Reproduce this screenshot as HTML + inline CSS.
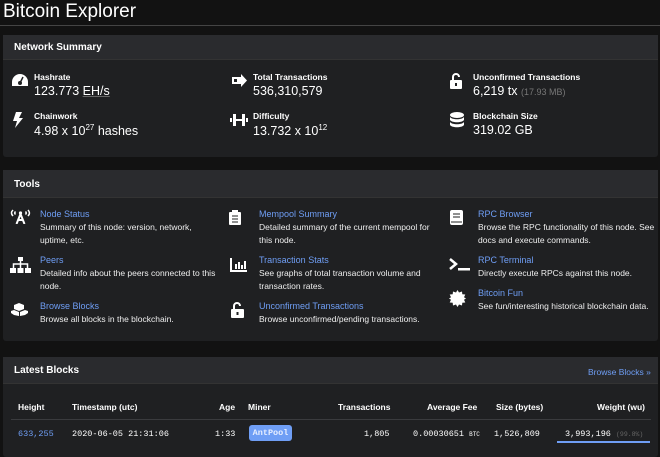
<!DOCTYPE html>
<html><head><meta charset="utf-8"><style>
*{margin:0;padding:0;box-sizing:border-box}
body{width:660px;height:447px;overflow:hidden;background:#121212;color:#fff;font-family:"Liberation Sans",sans-serif;position:relative}
.a{position:absolute;white-space:nowrap}
.card{position:absolute;left:3px;width:655px;background:#1f2022;border-radius:3px}
.hd{position:absolute;left:0;top:0;width:100%;background:#2a2b2e;border-bottom:1px solid #333}
.hd span{position:absolute;left:11px;font-size:10px;font-weight:bold}
.lbl{font-size:8.5px;font-weight:bold}
.val{font-size:12.5px}
.lk{color:#6f9ef5;font-size:9px}
.ds{font-size:8.5px;line-height:13px;color:#eee;white-space:normal}
.th{font-size:8.5px;font-weight:bold;position:absolute;top:402px}
.td{font-size:8.5px;font-family:"Liberation Mono",monospace;position:absolute;top:429px}
</style></head><body>
<div class="a" style="left:3px;top:1px;font-size:19px">Bitcoin Explorer</div>
<div class="a" style="left:0;top:25px;width:660px;height:1px;background:#444"></div>

<div class="card" style="top:35px;height:122px">
<div class="hd" style="height:25px"><span style="top:7px">Network Summary</span></div>
</div>
<svg class="a" style="left:11px;top:73px" width="18" height="14" viewBox="0 0 18 14"><path d="M9 1A8 8 0 0 0 1 9v4h16V9A8 8 0 0 0 9 1z" fill="#fff"/><circle cx="9" cy="10" r="2" fill="#1f2022"/><path d="M9 10l3-6" stroke="#1f2022" stroke-width="1.5"/></svg>
<div class="a lbl" style="left:34px;top:72px">Hashrate</div>
<div class="a val" style="left:34px;top:84px">123.773 <u style="text-decoration-color:#666">EH/s</u></div>
<svg class="a" style="left:231px;top:74px" width="16" height="13" viewBox="0 0 16 13"><path d="M1 3h5v2H3v3h3v2H1z M6 3h4V0l6 6.5L10 13V10H6z" fill="#fff"/></svg>
<div class="a lbl" style="left:253px;top:72px">Total Transactions</div>
<div class="a val" style="left:253px;top:84px">536,310,579</div>
<svg class="a" style="left:449px;top:73px" width="14" height="16" viewBox="0 0 14 16"><path d="M3 7V4a4 4 0 0 1 8 0h-2a2 2 0 0 0-4 0v3" fill="#fff"/><rect x="1" y="7" width="12" height="9" rx="1" fill="#fff"/><rect x="6" y="10" width="2" height="3" fill="#1f2022"/></svg>
<div class="a lbl" style="left:473px;top:72px">Unconfirmed Transactions</div>
<div class="a val" style="left:473px;top:84px">6,219 tx <span style="font-size:9px;color:#777">(17.93 MB)</span></div>
<svg class="a" style="left:13px;top:112px" width="10" height="16" viewBox="0 0 10 16"><path d="M3 0h6L6 6h4L2 16l2-7H0z" fill="#fff"/></svg>
<div class="a lbl" style="left:34px;top:111px">Chainwork</div>
<div class="a val" style="left:34px;top:123px">4.98 x 10<sup style="font-size:8px">27</sup> hashes</div>
<svg class="a" style="left:230px;top:114px" width="18" height="12" viewBox="0 0 18 12"><rect x="0" y="4" width="2" height="4" fill="#fff"/><rect x="3" y="0" width="3" height="12" fill="#fff"/><rect x="6" y="5" width="6" height="2" fill="#fff"/><rect x="12" y="0" width="3" height="12" fill="#fff"/><rect x="16" y="4" width="2" height="4" fill="#fff"/></svg>
<div class="a lbl" style="left:253px;top:111px">Difficulty</div>
<div class="a val" style="left:253px;top:123px">13.732 x 10<sup style="font-size:8px">12</sup></div>
<svg class="a" style="left:450px;top:112px" width="14" height="16" viewBox="0 0 14 16"><ellipse cx="7" cy="3" rx="7" ry="3" fill="#fff"/><path d="M0 5c2 3 12 3 14 0v3c-2 3-12 3-14 0zM0 10c2 3 12 3 14 0v3c-2 3-12 3-14 0z" fill="#fff"/></svg>
<div class="a lbl" style="left:473px;top:111px">Blockchain Size</div>
<div class="a val" style="left:473px;top:123px">319.02 GB</div>

<div class="card" style="top:170px;height:171px">
<div class="hd" style="height:28px"><span style="top:9px">Tools</span></div>
</div>
<svg class="a" style="left:10px;top:209px" width="21" height="15" viewBox="0 0 21 15"><path d="M3 1Q0 4 3 7M18 1Q21 4 18 7M5.5 2.5Q4 4 5.5 5.5M15.5 2.5Q17 4 15.5 5.5" stroke="#fff" stroke-width="1.5" fill="none"/><circle cx="10.5" cy="4" r="1.6" fill="#fff"/><path d="M10.5 5L6.5 15M10.5 5L14.5 15M8 11h5" stroke="#fff" stroke-width="2" fill="none"/></svg>
<div class="a lk" style="left:40px;top:209px">Node Status</div>
<div class="a ds" style="left:40px;top:221px;width:180px">Summary of this node: version, network, uptime, etc.</div>
<svg class="a" style="left:229px;top:210px" width="12" height="15" viewBox="0 0 12 15"><rect x="0" y="2" width="12" height="13" rx="1" fill="#fff"/><rect x="3" y="0" width="6" height="3" fill="#fff"/><path d="M3 6h6M3 9h6M3 12h6" stroke="#1f2022"/></svg>
<div class="a lk" style="left:259px;top:209px">Mempool Summary</div>
<div class="a ds" style="left:259px;top:221px;width:185px">Detailed summary of the current mempool for this node.</div>
<svg class="a" style="left:450px;top:210px" width="13" height="15" viewBox="0 0 13 15"><rect x="0" y="0" width="13" height="15" rx="2" fill="#fff"/><path d="M3 4h7M3 7h7" stroke="#1f2022"/><path d="M1 12h11" stroke="#1f2022"/></svg>
<div class="a lk" style="left:478px;top:209px">RPC Browser</div>
<div class="a ds" style="left:478px;top:221px;width:180px">Browse the RPC functionality of this node. See docs and execute commands.</div>

<svg class="a" style="left:10px;top:257px" width="21" height="16" viewBox="0 0 21 16"><rect x="8" y="0" width="5" height="4" fill="#fff"/><path d="M10.5 4v3M3.5 11V7h14v4M10.5 7v4" stroke="#fff" stroke-width="1.5" fill="none"/><rect x="0" y="11" width="6" height="5" fill="#fff"/><rect x="7.5" y="11" width="6" height="5" fill="#fff"/><rect x="15" y="11" width="6" height="5" fill="#fff"/></svg>
<div class="a lk" style="left:40px;top:255px">Peers</div>
<div class="a ds" style="left:40px;top:267px;width:185px">Detailed info about the peers connected to this node.</div>
<svg class="a" style="left:230px;top:258px" width="17" height="14" viewBox="0 0 17 14"><path d="M1 0v13h16" stroke="#fff" stroke-width="2" fill="none"/><rect x="5" y="6" width="2" height="5" fill="#fff"/><rect x="8" y="4" width="2" height="7" fill="#fff"/><rect x="11" y="7" width="2" height="4" fill="#fff"/><rect x="14" y="3" width="2" height="8" fill="#fff"/></svg>
<div class="a lk" style="left:259px;top:255px">Transaction Stats</div>
<div class="a ds" style="left:259px;top:267px;width:180px">See graphs of total transaction volume and transaction rates.</div>
<svg class="a" style="left:449px;top:258px" width="22" height="14" viewBox="0 0 22 14"><path d="M1 1l6 5-6 5" stroke="#fff" stroke-width="2.5" fill="none"/><rect x="9" y="10" width="12" height="2.5" fill="#fff"/></svg>
<div class="a lk" style="left:478px;top:255px">RPC Terminal</div>
<div class="a ds" style="left:478px;top:267px">Directly execute RPCs against this node.</div>

<svg class="a" style="left:11px;top:302px" width="17" height="15" viewBox="0 0 17 15"><path d="M8 1l5 2v4l-5 2-5-2V3z" fill="#fff"/><path d="M3 8l5 2v4l-5-1-3-2V9zM14 8l-5 2v4l5-1 3-2V9z" fill="#fff"/></svg>
<div class="a lk" style="left:40px;top:301px">Browse Blocks</div>
<div class="a ds" style="left:40px;top:313px">Browse all blocks in the blockchain.</div>
<svg class="a" style="left:231px;top:302px" width="13" height="16" viewBox="0 0 13 16"><path d="M2 7V4a4 4 0 0 1 8 0h-2a2 2 0 0 0-4 0v3" fill="#fff"/><rect x="0" y="7" width="13" height="9" rx="1" fill="#fff"/><rect x="5.5" y="10" width="2" height="3" fill="#1f2022"/></svg>
<div class="a lk" style="left:259px;top:301px">Unconfirmed Transactions</div>
<div class="a ds" style="left:259px;top:313px">Browse unconfirmed/pending transactions.</div>
<svg class="a" style="left:449px;top:290px" width="17" height="17" viewBox="0 0 17 17"><polygon points="8.5,0 10,2.5 13,1.5 13.3,4.3 16.3,4.5 15,7.3 17,8.5 15,9.7 16.3,12.5 13.3,12.7 13,15.5 10,14.5 8.5,17 7,14.5 4,15.5 3.7,12.7 0.7,12.5 2,9.7 0,8.5 2,7.3 0.7,4.5 3.7,4.3 4,1.5 7,2.5" fill="#fff"/></svg>
<div class="a lk" style="left:478px;top:288px">Bitcoin Fun</div>
<div class="a ds" style="left:478px;top:300px">See fun/interesting historical blockchain data.</div>

<div class="card" style="top:357px;height:100px">
<div class="hd" style="height:27px"><span style="top:8px">Latest Blocks</span></div>
</div>
<div class="a lk" style="left:588px;top:367px;font-size:8.5px">Browse Blocks »</div>
<div class="th" style="left:18px">Height</div>
<div class="th" style="left:72px">Timestamp (utc)</div>
<div class="th" style="left:219px">Age</div>
<div class="th" style="left:248px">Miner</div>
<div class="th" style="left:338px">Transactions</div>
<div class="th" style="left:427px">Average Fee</div>
<div class="th" style="left:496px">Size (bytes)</div>
<div class="th" style="left:597px">Weight (wu)</div>
<div class="a" style="left:11px;top:419px;width:640px;height:1px;background:#3a3b3e"></div>
<div class="td" style="left:18px;color:#6f9ef5">633,255</div>
<div class="td" style="left:72px">2020-06-05 21:31:06</div>
<div class="td" style="left:215px">1:33</div>
<div class="a" style="left:249px;top:425px;width:43px;height:16px;background:#6f9ef5;border-radius:3px;font-size:8.5px;font-weight:bold;color:#e8efff;text-align:center;line-height:16px;font-family:'Liberation Mono',monospace">AntPool</div>
<div class="td" style="left:364px">1,805</div>
<div class="td" style="left:413px">0.00030651 <span style="font-size:6px">BTC</span></div>
<div class="td" style="left:494px">1,526,809</div>
<div class="td" style="left:565px">3,993,196 <span style="font-size:6.5px;color:#666">(99.8%)</span></div>
<div class="a" style="left:557px;top:441px;width:93px;height:2px;background:#6f9ef5"></div>
</body></html>
